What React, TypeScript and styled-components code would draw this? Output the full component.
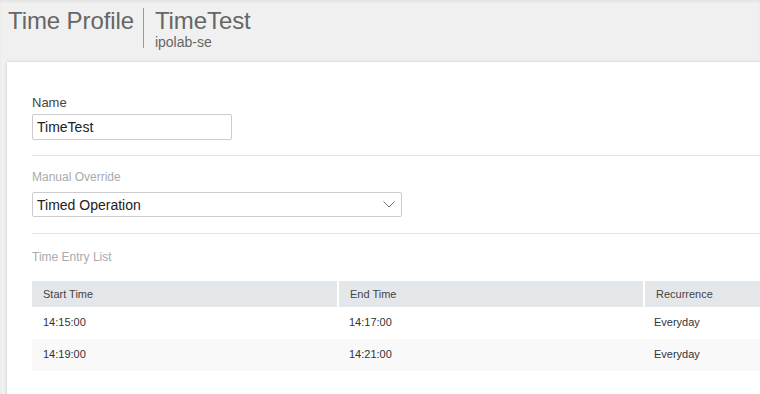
import styled, { createGlobalStyle } from "styled-components";

const GlobalStyle = createGlobalStyle`
    html, body {
        margin: 0;
        padding: 0;
        background: #f0f0f0;
        overflow: hidden;
        font-family: "Liberation Sans", Arial, sans-serif;
    }
`

const Page = styled.div`
    width: 100%;
    min-height: 100vh;
    background: #f0f0f0;
    box-shadow: inset 0 2px 3px rgba(0, 0, 0, 0.05);
`

const Header = styled.header`
    height: 62px;
    box-sizing: border-box;
    padding: 7px 0 0 8px;
    display: flex;
    align-items: flex-start;
`

const Title = styled.h1`
    margin: 0;
    font-size: 24px;
    line-height: 28px;
    font-weight: 400;
    color: #666;
    letter-spacing: -0.1px;
`

const Divider = styled.div`
    width: 1px;
    height: 40px;
    margin: 1px 11px 0 9px;
    background: #9a9a9a;
`

const TitleGroup = styled.div`
    display: flex;
    flex-direction: column;
`

const Subtitle = styled.span`
    font-size: 14px;
    line-height: 14px;
    color: #666;
`

const Card = styled.main`
    margin-left: 7px;
    width: calc(100% - 7px);
    min-height: 340px;
    box-sizing: border-box;
    overflow: hidden;
    background: #fff;
    padding: 33px 0 0 25px;
    box-shadow: 0 0 3px rgba(0, 0, 0, 0.18);
`

const Label = styled.label<{ $muted?: boolean }>`
    display: block;
    font-size: ${p => (p.$muted ? "12px" : "13px")};
    line-height: ${p => (p.$muted ? "15px" : "16px")};
    color: ${p => (p.$muted ? "#aaa" : "#444")};
    margin-bottom: ${p => (p.$muted ? "7px" : "3px")};
`

const Input = styled.div`
    width: 200px;
    height: 26px;
    box-sizing: border-box;
    border: 1px solid #ccc;
    border-radius: 2px;
    padding-left: 4px;
    display: flex;
    align-items: center;
    font-size: 14px;
    color: #222;
`

const Select = styled(Input)`
    width: 370px;
    height: 25px;
    justify-content: space-between;
    padding-right: 6px;
`

const Rule = styled.hr<{ $top: number }>`
    border: none;
    height: 1px;
    background: #e2e2e2;
    margin: ${p => p.$top}px 0 14px 0;
`

const SectionTitle = styled.div`
    font-size: 12px;
    line-height: 15px;
    color: #aaa;
    margin: 16px 0 16px;
`

const Table = styled.table`
    width: 918px;
    border-collapse: collapse;
    font-size: 11px;
    line-height: 13px;
    color: #333;
    th {
        height: 26px;
        background: #e4e7ea;
        font-weight: 400;
        text-align: left;
        padding: 0 0 0 11px;
        border-right: 2px solid #fff;
        color: #444;
    }
    th:last-child {
        border-right: none;
    }
    td {
        box-sizing: border-box;
        height: 32px;
        padding: 0 0 2px 11px;
    }
    td:last-child {
        padding-left: 10px;
    }
    tbody tr:nth-child(even) td {
        background: #f9f9f9;
    }
`

const entries = [
    { start: "14:15:00", end: "14:17:00", recurrence: "Everyday" },
    { start: "14:19:00", end: "14:21:00", recurrence: "Everyday" },
]

export default function App() {
    return (
        <>
            <GlobalStyle />
            <Page>
                <Header>
                    <Title>Time Profile</Title>
                    <Divider />
                    <TitleGroup>
                        <Title>TimeTest</Title>
                        <Subtitle>ipolab-se</Subtitle>
                    </TitleGroup>
                </Header>
                <Card>
                    <Label>Name</Label>
                    <Input>TimeTest</Input>
                    <Rule $top={15} />
                    <Label $muted>Manual Override</Label>
                    <Select>
                        <span>Timed Operation</span>
                        <svg width="12" height="7" viewBox="0 0 12 7">
                            <path d="M0.5 0.5 L6 6 L11.5 0.5" fill="none" stroke="#777" strokeWidth="1" />
                        </svg>
                    </Select>
                    <Rule $top={16} />
                    <SectionTitle>Time Entry List</SectionTitle>
                    <Table>
                        <colgroup>
                            <col style={{ width: 306 }} />
                            <col style={{ width: 306 }} />
                            <col style={{ width: 306 }} />
                        </colgroup>
                        <thead>
                            <tr>
                                <th>Start Time</th>
                                <th>End Time</th>
                                <th>Recurrence</th>
                            </tr>
                        </thead>
                        <tbody>
                            {entries.map((e, i) => (
                                <tr key={i}>
                                    <td>{e.start}</td>
                                    <td>{e.end}</td>
                                    <td>{e.recurrence}</td>
                                </tr>
                            ))}
                        </tbody>
                    </Table>
                </Card>
            </Page>
        </>
    )
}
